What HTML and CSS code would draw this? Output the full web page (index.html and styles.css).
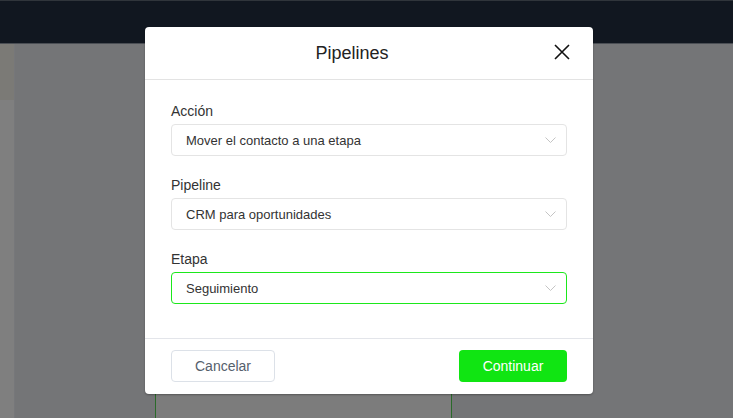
FILE: index.html
```html
<!DOCTYPE html>
<html lang="es">
<head>
    <meta charset="UTF-8">
    <meta name="viewport" content="width=device-width, initial-scale=1.0">
    <title>Pipelines</title>
    <link rel="stylesheet" href="styles.css">
</head>
<body>
    <div class="topbar"></div>
    <div class="layout">
        <div class="side">
            <div class="side-top"></div>
        </div>
        <div class="main">
            <div class="card"></div>
        </div>
    </div>

    <div class="modal">
        <div class="modal-header">
            <h2>Pipelines</h2>
            <button class="close" aria-label="Cerrar">
                <svg width="16" height="16" viewBox="0 0 16 16">
                    <path d="M1 1L15 15M15 1L1 15" stroke="#111" stroke-width="1.6" fill="none"/>
                </svg>
            </button>
        </div>
        <div class="modal-body">
            <label class="field-label">Acción</label>
            <div class="select">
                <span>Mover el contacto a una etapa</span>
                <svg class="chevron" width="11" height="7" viewBox="0 0 11 7"><path d="M0.5 0.5L5.5 5.5L10.5 0.5" stroke="#c4c4c4" fill="none"/></svg>
            </div>
            <label class="field-label">Pipeline</label>
            <div class="select">
                <span>CRM para oportunidades</span>
                <svg class="chevron" width="11" height="7" viewBox="0 0 11 7"><path d="M0.5 0.5L5.5 5.5L10.5 0.5" stroke="#c4c4c4" fill="none"/></svg>
            </div>
            <label class="field-label">Etapa</label>
            <div class="select focused">
                <span>Seguimiento</span>
                <svg class="chevron" width="11" height="7" viewBox="0 0 11 7"><path d="M0.5 0.5L5.5 5.5L10.5 0.5" stroke="#c4c4c4" fill="none"/></svg>
            </div>
        </div>
        <div class="modal-footer">
            <button class="btn btn-cancel">Cancelar</button>
            <button class="btn btn-primary">Continuar</button>
        </div>
    </div>
</body>
</html>
```

FILE: styles.css
```css
body {
    margin: 0;
    padding: 0;
    width: 733px;
    height: 418px;
    overflow: hidden;
    font-family: "Liberation Sans", Arial, sans-serif;
    background-color: #747577;
    position: relative;
}

.topbar {
    background-color: #111720;
    border-top: 1px solid #30353b;
    border-bottom: 1px solid #4a4e54;
    box-sizing: border-box;
    height: 44px;
}

.layout {
    display: flex;
    height: 374px;
    overflow: hidden;
}

.side {
    width: 14px;
    background-color: #7f7f7f;
    border-right: 1px solid #76777a;
}

.side-top {
    height: 56px;
    background-color: #7b7a76;
}

.main {
    flex: 1;
    padding-left: 140px;
    padding-top: 300px;
}

.card {
    width: 295px;
    height: 74px;
    background-color: #7c7c7c;
    border-left: 1px solid #2a6a2a;
    border-right: 1px solid #2a6a2a;
}

/* modal */
.modal {
    position: absolute;
    left: 145px;
    top: 27px;
    width: 448px;
    height: 367px;
    background-color: #fff;
    border-radius: 4px;
    display: flex;
    flex-direction: column;
    box-shadow: 0 1px 2px rgba(0, 0, 0, 0.3);
}

.modal-header {
    height: 52px;
    border-bottom: 1px solid #e3e3e3;
    display: flex;
    align-items: center;
    justify-content: center;
    padding-right: 34px;
    position: relative;
}

.modal-header h2 {
    margin: 0;
    font-size: 18px;
    font-weight: normal;
    color: #222;
}

.close {
    position: absolute;
    right: 23px;
    top: 17px;
    border: none;
    background: none;
    padding: 0;
    width: 16px;
    height: 16px;
    display: flex;
}

.modal-body {
    padding: 21px 26px 34px;
    display: flex;
    flex-direction: column;
}

.field-label {
    font-size: 14px;
    line-height: 20px;
    color: #333;
    margin-bottom: 3px;
}

.select {
    height: 32px;
    box-sizing: border-box;
    border: 1px solid #e4e4e4;
    border-radius: 4px;
    display: flex;
    align-items: center;
    justify-content: space-between;
    padding: 0 10px 0 14px;
    font-size: 13px;
    color: #333;
    margin-bottom: 19px;
}

.select:last-child {
    margin-bottom: 0;
}

.select.focused {
    border-color: #1be81b;
}

.chevron {
    margin-top: 1px;
}

.modal-footer {
    border-top: 1px solid #e3e5ea;
    padding: 11px 26px 12px;
    display: flex;
    justify-content: space-between;
}

.btn {
    height: 32px;
    border-radius: 4px;
    font-family: "Liberation Sans", Arial, sans-serif;
    font-size: 14px;
    cursor: pointer;
}

.btn-cancel {
    width: 104px;
    background-color: #fff;
    border: 1px solid #dce1e8;
    color: #56606c;
}

.btn-primary {
    width: 108px;
    background-color: #10e512;
    border: none;
    color: #fff;
}
```
